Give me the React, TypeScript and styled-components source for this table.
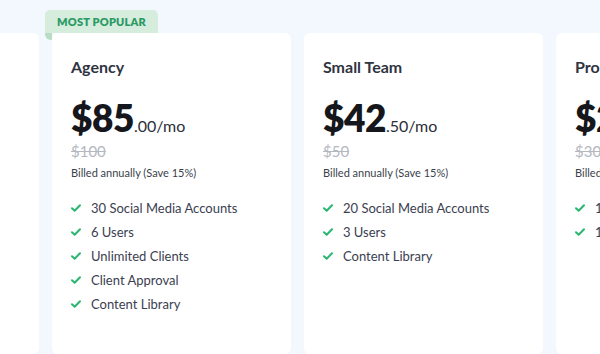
import React from "react";
import styled, { createGlobalStyle } from "styled-components";

const Global = createGlobalStyle`
  html, body { margin: 0; padding: 0; }
  body {
    background: #f3f7fe;
    font-family: Lato, "Open Sans", Arial, sans-serif;
    width: 600px;
    height: 354px;
    overflow: hidden;
  }
`;

const Row = styled.div`
  display: flex;
  gap: 13px;
  padding-top: 33px;
  margin-left: -200px;
`;

const Card = styled.div`
  position: relative;
  flex: 0 0 239px;
  height: 321px;
  background: #ffffff;
  border-radius: 6px;
  padding: 24px 19px 0 19px;
  box-sizing: border-box;
`;

const Badge = styled.div`
  position: absolute;
  top: -23px;
  left: -7px;
  width: 113px;
  height: 23px;
  background: #d6ecdd;
  border-radius: 5px 5px 0 0;
  color: #2a9a64;
  font-size: 11px;
  font-weight: 800;
  letter-spacing: 0.2px;
  display: flex;
  align-items: center;
  justify-content: center;
  &::after {
    content: "";
    position: absolute;
    left: 0;
    top: 23px;
    width: 7px;
    height: 7px;
    background: #b8dcc4;
    border-radius: 0 0 0 6px;
  }
`;

const Title = styled.div`
  font-size: 16px;
  font-weight: 700;
  color: #2f3441;
  height: 20px;
  line-height: 20px;
`;

const PriceRow = styled.div`
  margin-top: 21px;
  display: flex;
  align-items: baseline;
  height: 40px;
  line-height: 40px;
`;

const Big = styled.span`
  font-size: 37px;
  font-weight: 800;
  color: #15171c;
  letter-spacing: -0.5px;
`;

const Small = styled.span`
  font-size: 16px;
  color: #2b2f38;
`;

const Old = styled.div`
  margin-top: 4px;
  font-size: 15px;
  color: #b4b8bf;
  text-decoration: line-through;
  height: 18px;
  line-height: 18px;
`;

const Billed = styled.div`
  margin-top: 5px;
  font-size: 11px;
  color: #3a3f4b;
  height: 16px;
  line-height: 16px;
`;

const List = styled.ul`
  list-style: none;
  margin: 19px 0 0;
  padding: 0;
  display: flex;
  flex-direction: column;
  gap: 8px;
`;

const Item = styled.li`
  display: flex;
  align-items: center;
  gap: 10px;
  font-size: 13px;
  color: #3b4050;
  height: 16px;
  line-height: 16px;
`;

const Check = () => (
  <svg width="10" height="8" viewBox="0 0 10 8">
    <path d="M1 4.2 L3.7 6.8 L9 1.2" fill="none" stroke="#2bb673" strokeWidth="2" strokeLinecap="round" strokeLinejoin="round" />
  </svg>
);

type Plan = {
  name: string;
  dollars: string;
  cents: string;
  old: string;
  features: string[];
  popular?: boolean;
};

const plans: Plan[] = [
  { name: "Enterprise", dollars: "$170", cents: ".00/mo", old: "$200", features: ["50 Social Media Accounts", "10 Users", "Unlimited Clients", "Client Approval", "Content Library"] },
  { name: "Agency", dollars: "$85", cents: ".00/mo", old: "$100", popular: true, features: ["30 Social Media Accounts", "6 Users", "Unlimited Clients", "Client Approval", "Content Library"] },
  { name: "Small Team", dollars: "$42", cents: ".50/mo", old: "$50", features: ["20 Social Media Accounts", "3 Users", "Content Library"] },
  { name: "Pro", dollars: "$25", cents: ".50/mo", old: "$30", features: ["10 Social Media Accounts", "1 User"] },
];

export default function App() {
  return (
    <>
      <Global />
      <Row>
        {plans.map((p) => (
          <Card key={p.name}>
            {p.popular && <Badge>MOST POPULAR</Badge>}
            <Title>{p.name}</Title>
            <PriceRow>
              <Big>{p.dollars}</Big>
              <Small>{p.cents}</Small>
            </PriceRow>
            <Old>{p.old}</Old>
            <Billed>Billed annually (Save 15%)</Billed>
            <List>
              {p.features.map((f) => (
                <Item key={f}>
                  <Check />
                  {f}
                </Item>
              ))}
            </List>
          </Card>
        ))}
      </Row>
    </>
  );
}
